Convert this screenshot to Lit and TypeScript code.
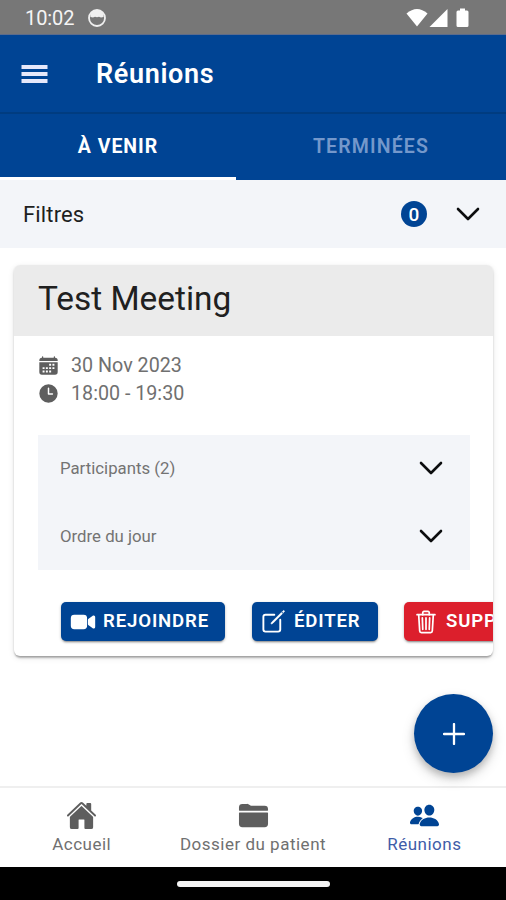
import { LitElement, html, css, svg } from "lit";
import { customElement } from "lit/decorators.js";

const chevron = html`<svg class="chevron" viewBox="0 0 24 14"><path d="M2 2l10 10L22 2" fill="none" stroke="currentColor" stroke-width="2.6" stroke-linecap="round" stroke-linejoin="round"/></svg>`;

const icon = (cls: string, body: unknown) => html`<svg class=${cls} viewBox="0 0 512 512">${body}</svg>`;

const home = svg`<path d="M261.56 101.28a8 8 0 00-11.06 0L66.4 277.15a8 8 0 00-2.47 5.79L63.9 448a32 32 0 0032 32H192a16 16 0 0016-16V328a8 8 0 018-8h80a8 8 0 018 8v136a16 16 0 0016 16h96.06a32 32 0 0032-32V282.94a8 8 0 00-2.47-5.79z"/><path d="M490.91 244.15l-74.8-71.56V64a16 16 0 00-16-16h-48a16 16 0 00-16 16v32l-57.92-55.38C272.77 35.14 264.71 32 256 32c-8.68 0-16.72 3.14-22.14 8.63l-212.7 203.5c-6.22 6-7 15.87-1.34 22.37A16 16 0 0043 267.56L250.5 69.28a8 8 0 0111.06 0l207.52 198.28a16 16 0 0022.59-.44c6.14-6.36 5.63-16.86-.76-22.97z"/>`;
const folder = svg`<path d="M496 152a56 56 0 00-56-56H220.11a23.89 23.89 0 01-13.31-4L179 73.41A55.77 55.77 0 00147.89 64H72a56 56 0 00-56 56v48a8 8 0 008 8h464a8 8 0 008-8zM16 392a56 56 0 0056 56h368a56 56 0 0056-56V216a8 8 0 00-8-8H24a8 8 0 00-8 8z"/>`;
const people = svg`<path d="M336 256c-20.56 0-40.44-9.18-56-25.84-15.13-16.25-24.37-37.92-26-61-1.74-24.62 5.77-47.26 21.14-63.76S312 80 336 80c23.83 0 45.38 9.06 60.7 25.52 15.47 16.62 23 39.22 21.26 63.63-1.67 23.11-10.9 44.77-26 61C376.44 246.82 356.57 256 336 256zM467.83 432H204.18a27.71 27.71 0 01-22-10.67 30.22 30.22 0 01-5.26-25.79c8.42-33.81 29.28-61.85 60.32-81.08C264.79 297.4 299.86 288 336 288c36.85 0 71 9 98.71 26.05 31.11 19.13 52 47.33 60.38 81.55a30.27 30.27 0 01-5.32 25.78A27.68 27.68 0 01467.83 432zM147 260c-35.19 0-66.13-32.72-69-72.93-1.42-20.6 5-39.65 18-53.62 12.86-13.83 31-21.45 51-21.45s38 7.66 50.93 21.57c13.1 14.08 19.5 33.09 18 53.52-2.87 40.2-33.8 72.91-68.93 72.91zM212.66 291.45c-17.59-8.6-40.42-12.9-65.65-12.9-29.46 0-58.07 7.68-80.57 21.62-25.51 15.83-42.67 38.88-49.6 66.71a27.39 27.39 0 004.79 23.36A25.32 25.32 0 0041.72 400h111a8 8 0 007.87-6.57c.11-.63.25-1.26.41-1.88 8.48-34.06 28.35-62.84 57.71-83.82a8 8 0 00-.63-13.39c-1.57-.92-3.37-1.89-5.42-2.89z"/>`;
const videocam = svg`<path d="M464 384.39a32 32 0 01-13-2.77 15.77 15.77 0 01-2.71-1.54l-82.71-58.22A32 32 0 01352 295.7v-79.4a32 32 0 0113.58-26.16l82.71-58.22a15.77 15.77 0 012.71-1.54 32 32 0 0145 29.24v192.76a32 32 0 01-32 32zM268 400H84a68.07 68.07 0 01-68-68V180a68.07 68.07 0 0168-68h184.48A67.6 67.6 0 01336 179.52V332a68.07 68.07 0 01-68 68z"/>`;
const create = svg`<path d="M384 224v184a40 40 0 01-40 40H104a40 40 0 01-40-40V168a40 40 0 0140-40h167.48" fill="none" stroke="currentColor" stroke-width="36" stroke-linecap="round" stroke-linejoin="round"/><path stroke="currentColor" stroke-width="10" d="M459.94 53.25a16.06 16.06 0 00-23.22-.56L424.35 65a8 8 0 000 11.31l11.34 11.32a8 8 0 0011.34 0l12.06-12c6.1-6.09 6.67-16.01.85-22.38zM399.34 90L218.82 270.2a9 9 0 00-2.31 3.93L208.16 299a3.91 3.91 0 004.86 4.86l24.85-8.35a9 9 0 003.93-2.31L422 112.66a9 9 0 000-12.66l-9.95-10a9 9 0 00-12.71 0z"/>`;
const trash = svg`<g fill="none" stroke="currentColor" stroke-width="34" stroke-linecap="round" stroke-linejoin="round"><path d="M112 112l20 320c.95 18.49 14.4 32 32 32h184c17.67 0 30.87-13.51 32-32l20-320M80 112h352"/><path d="M192 112V72a23.93 23.93 0 0124-24h80a23.93 23.93 0 0124 24v40M256 176v224M184 176l8 224M328 176l-8 224"/></g>`;
const calendar = svg`<path d="M96 64V48a16 16 0 0132 0v16h256V48a16 16 0 0132 0v16a64 64 0 0164 64v16H32v-16a64 64 0 0164-64z"/><path fill-rule="evenodd" d="M32 176h448v240a64 64 0 01-64 64H96a64 64 0 01-64-64zM272 216v48h48v-48zM352 216v48h48v-48zM112 296v48h48v-48zM192 296v48h48v-48zM272 296v48h48v-48zM352 296v48h48v-48zM112 376v48h48v-48zM192 376v48h48v-48zM272 376v48h48v-48z"/>`;
const time = svg`<path fill-rule="evenodd" d="M256 32a224 224 0 100 448 224 224 0 000-448zm96 256h-96a18 18 0 01-18-18V128a18 18 0 0136 0v124h78a18 18 0 010 36z"/>`;

@customElement("app-root")
export class AppRoot extends LitElement {
  static styles = css`
    :host { display: flex; flex-direction: column; position: relative; width: 506px; height: 900px; overflow: hidden; background: #fff; font-family: Roboto, sans-serif; color: #1d1f22; }
    * { box-sizing: border-box; }
    svg { display: block; fill: currentColor; flex: none; }
    .status { height: 35px; flex: none; background: #777; border-bottom: 1px solid #5c6c8c; color: #fff; display: flex; align-items: center; padding: 1px 37px 0 25px; }
    .clock { font-size: 20px; letter-spacing: -0.1px; color: #f4f4f4; }
    .face { width: 20px; height: 20px; margin-left: 13px; }
    .signals { display: flex; margin-left: auto; align-items: center; }
    .wifi { width: 22px; height: 20px; }
    .cell { width: 19px; height: 20px; margin-left: 1px; }
    .batt { width: 13px; height: 20px; margin-left: 8px; }
    .bar { height: 79px; flex: none; background: #004494; border-bottom: 2px solid #003c80; display: flex; align-items: center; padding-left: 21px; color: #fff; }
    .menu { width: 27px; height: 20px; color: #e6e8fa; }
    .bar h1 { margin: 1px 0 0 48px; font-size: 27px; font-weight: 600; letter-spacing: 0.65px; }
    .tabs { height: 66px; flex: none; background: #004494; display: grid; grid-template-columns: 236px 270px; }
    .tab { display: flex; align-items: center; justify-content: center; font-size: 19.5px; font-weight: 600; letter-spacing: 1.15px; color: #7498cb; border-bottom: 3px solid transparent; padding-top: 1px; }
    .tab.on { color: #fff; font-weight: 700; letter-spacing: 1px; border-bottom-color: #fff; }
    .filters { height: 68px; flex: none; background: #f3f5f9; display: flex; align-items: center; padding: 0 26px 0 23px; font-size: 22px; letter-spacing: 0.15px; }
    .badge { width: 26px; height: 26px; border-radius: 50%; background: #004494; color: #fff; margin: 0 29px 0 auto; font-size: 19px; font-weight: 500; letter-spacing: 0; display: flex; align-items: center; justify-content: center; }
    .chevron { width: 24px; height: 14px; color: #0c0d0f; }
    .card { margin: 17px 13px 0 14px; height: 391px; flex: none; border-radius: 6px; overflow: hidden; background: #fff; box-shadow: 0 3px 2px -1px rgba(0,0,0,.22), 0 1px 2px rgba(0,0,0,.16), 0 2px 6px rgba(0,0,0,.1); }
    .card h2 { margin: 0; height: 71px; padding: 0 24px 5px; background: #ebebeb; display: flex; align-items: center; font-size: 33.4px; font-weight: 400; color: #202020; }
    .body { padding: 15px 23px 0 24px; }
    .meta { display: flex; align-items: center; gap: 12px; height: 28px; font-size: 19.7px; color: #707070; }
    .meta svg { width: 21px; height: 21px; color: #5e5e5e; }
    .list { margin-top: 28px; background: #f3f5f9; height: 135px; }
    .row { height: 67.5px; display: flex; align-items: center; justify-content: space-between; padding: 0 27px 2px 22px; font-size: 16.8px; color: #737373; }
    .row + .row { padding-bottom: 1px; }
    .actions { display: flex; gap: 27px; padding: 32px 0 0 23px; width: 600px; }
    .btn { height: 39px; display: flex; align-items: center; border-radius: 5px; background: #004494; color: #fff; font-size: 18.6px; font-weight: 600; letter-spacing: 0.85px; box-shadow: 0 3px 2px -2px rgba(0,0,0,.3), 0 1px 3px rgba(0,0,0,.28); flex: none; }
    .btn span { margin-top: -1px; }
    .btn svg { width: 26px; height: 26px; }
    .join { width: 164px; padding-left: 9px; gap: 7px; }
    .edit { width: 126px; padding-left: 8px; gap: 8px; }
    .edit svg { width: 27px; height: 27px; }
    .edit, .edit svg { padding-left: 0; }
    .edit { padding-left: 8px; gap: 7px; }
    .del { width: 190px; padding-left: 9px; gap: 7px; background: #dc1f2c; margin-left: -1px; }
    .fab { position: absolute; left: 414px; top: 694px; width: 79px; height: 79px; border-radius: 50%; background: #004494; color: #fff; display: flex; align-items: center; justify-content: center; box-shadow: 0 4px 7px rgba(0,0,0,.2), 0 6px 14px rgba(0,0,0,.14); }
    .fab svg { width: 22px; height: 22px; }
    .nav { margin-top: auto; height: 81px; flex: none; background: #fff; border-top: 2px solid #efefef; display: flex; justify-content: center; }
    .item { display: flex; flex-direction: column; align-items: center; width: 171.3px; flex: none; padding-top: 12px; gap: 1px; font-size: 17px; letter-spacing: 0.5px; line-height: 24px; color: #707070; }
    .item svg { width: 31px; height: 31px; color: #5e5e5e; }
    .item.on { color: #3f5ca8; }
    .item.on svg { color: #004494; }
    .system { height: 33px; flex: none; background: #000; display: flex; justify-content: center; align-items: center; }
    .pill { width: 153px; height: 6px; border-radius: 3px; background: #f4f4f4; }
  `;

  render() {
    return html`
      <div class="status">
        <span class="clock">10:02</span>
        <svg class="face" viewBox="0 0 20 20"><circle cx="10" cy="10" r="8" fill="none" stroke="#f0f0f0" stroke-width="1.800"/><path d="M3.500 9C3 4 7 2 10 2s7 2 6.500 7l-2.500 0.500-2-0.800-2 0.600-2-0.600-2 0.800z" fill="#f0f0f0"/></svg>
        <div class="signals">
          <svg class="wifi" viewBox="0 0 22 20"><path d="M0.500 5.500Q11-3.500 21.500 5.500L11 18.500z"/></svg>
          <svg class="cell" viewBox="0 0 19 20"><path d="M18.500 1v18H0.500z"/></svg>
          <svg class="batt" viewBox="0 0 13 20"><path d="M4 0.500h5v2h2a1.500 1.500 0 011.500 1.500v13.500a1.500 1.500 0 01-1.500 1.500H2a1.500 1.500 0 01-1.500-1.500V4A1.500 1.500 0 012 2.500h2z"/></svg>
        </div>
      </div>
      <header class="bar">
        <svg class="menu" viewBox="0 0 27 20"><path d="M0.500 1h26v4h-26zM0.500 8h26v4h-26zM0.500 15h26v4h-26z"/></svg>
        <h1>Réunions</h1>
      </header>
      <div class="tabs"><div class="tab on">À VENIR</div><div class="tab">TERMINÉES</div></div>
      <div class="filters"><span>Filtres</span><span class="badge">0</span>${chevron}</div>
      <section class="card">
        <h2>Test Meeting</h2>
        <div class="body">
          <div class="meta">${icon("", calendar)}<span>30 Nov 2023</span></div>
          <div class="meta">${icon("", time)}<span>18:00 - 19:30</span></div>
          <div class="list">
            <div class="row"><span>Participants (2)</span>${chevron}</div>
            <div class="row"><span>Ordre du jour</span>${chevron}</div>
          </div>
          <div class="actions">
            <div class="btn join">${icon("", videocam)}<span>REJOINDRE</span></div>
            <div class="btn edit">${icon("", create)}<span>ÉDITER</span></div>
            <div class="btn del">${icon("", trash)}<span>SUPPRIMER</span></div>
          </div>
        </div>
      </section>
      <div class="fab"><svg viewBox="0 0 22 22"><path d="M11 1v20M1 11h20" stroke="currentColor" stroke-width="2.300" stroke-linecap="round"/></svg></div>
      <nav class="nav">
        <div class="item">${icon("", home)}<span>Accueil</span></div>
        <div class="item">${icon("", folder)}<span>Dossier du patient</span></div>
        <div class="item on">${icon("", people)}<span>Réunions</span></div>
      </nav>
      <div class="system"><div class="pill"></div></div>
    `;
  }
}
